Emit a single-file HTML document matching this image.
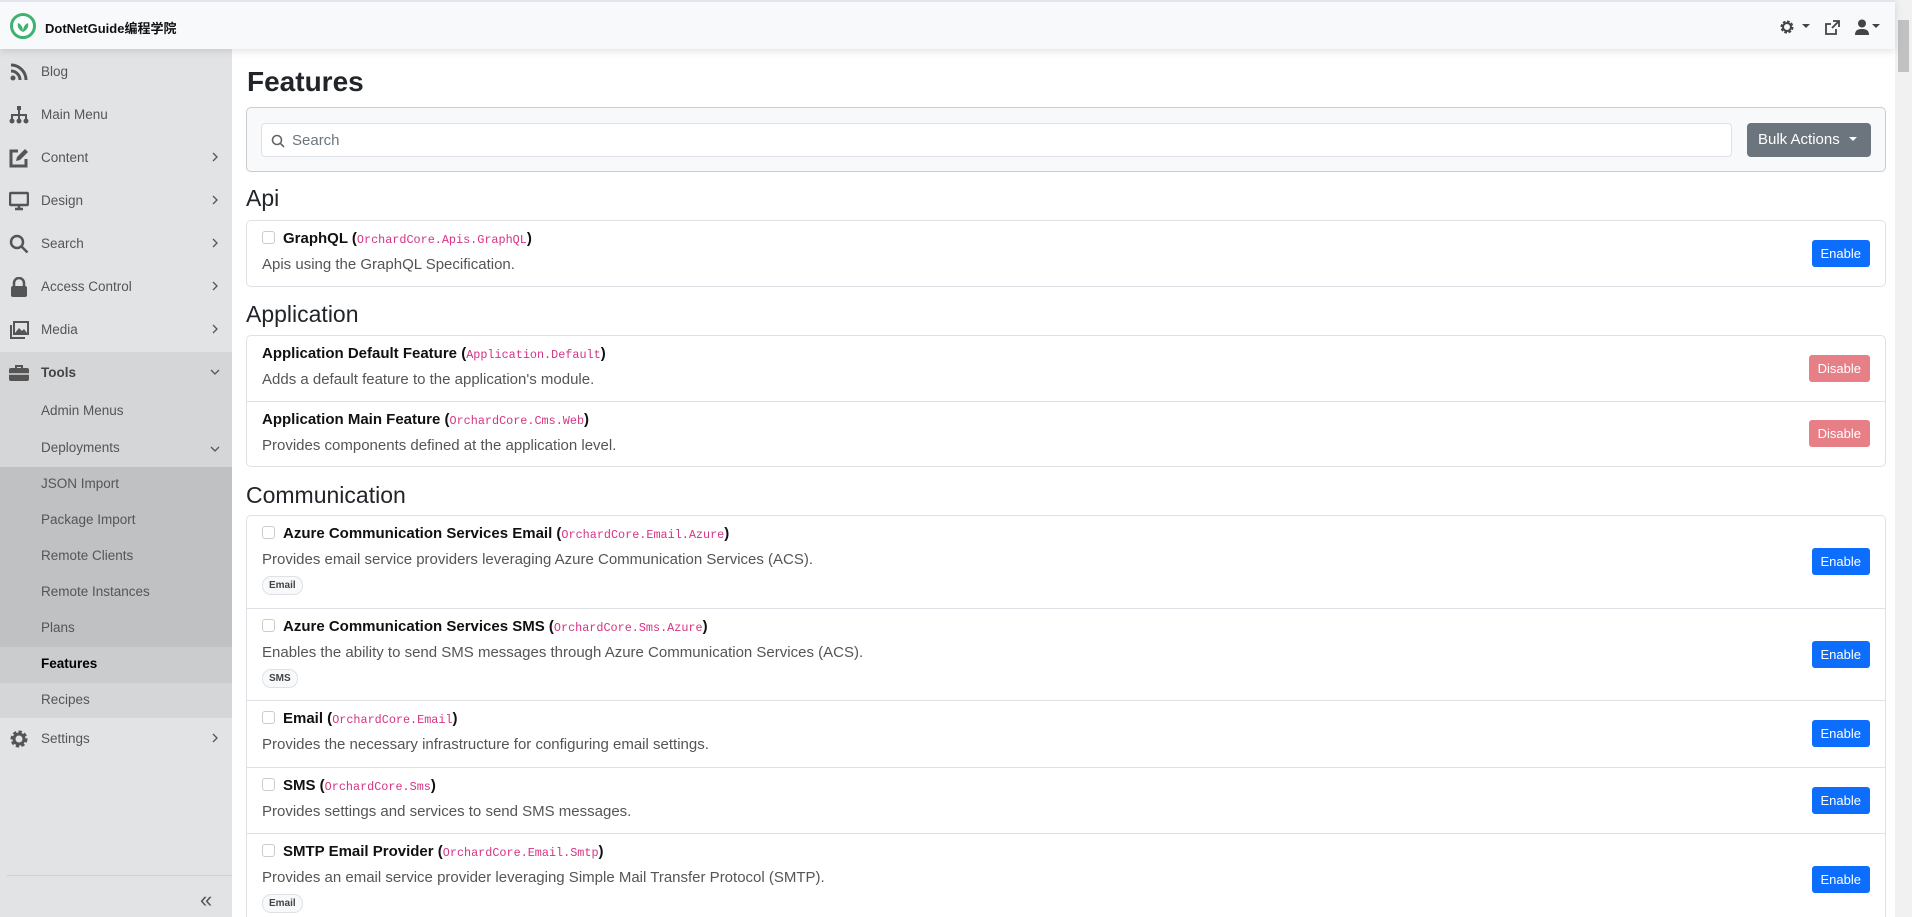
<!DOCTYPE html>
<html style="overflow:hidden;height:917px"><head><meta charset="utf-8"><style>
*{box-sizing:border-box;margin:0;padding:0}
body{width:1912px;height:917px;overflow:hidden;font-family:"Liberation Sans","Noto Sans CJK SC",sans-serif;background:#fff;position:relative;color:#212529}
.top{position:absolute;left:0;top:0;width:1895px;height:49px;background:#f8f9fa;box-shadow:0 2px 8px rgba(0,0,0,.12);z-index:3;border-top:2px solid #e4e4ee}
.logo{position:absolute;left:10px;top:11px;width:26px;height:26px;border-radius:50%;border:3px solid #3cb371;background:#fff}
.brand{position:absolute;left:45px;top:16px;font-size:13px;font-weight:bold;color:#111}
.side{position:absolute;left:0;top:49px;width:232px;height:868px;background:#e2e3e5}
.it{position:absolute;left:0;width:232px;font-size:13.5px;color:#555}
.it .t{position:absolute;left:41px}
.it .c{position:absolute;left:211px;top:4px;width:8px;height:10px}
.ic{position:absolute;left:9px;width:20px;height:20px}
.sb{position:absolute;right:0;top:0;width:17px;height:917px;background:#f1f1f1}
.main{position:absolute;left:232px;top:49px;width:1663px;height:868px;overflow:hidden}
h1{position:absolute;left:15px;top:17px;font-size:28px;font-weight:bold;color:#212529}
.panel{position:absolute;left:14px;top:58px;width:1640px;height:65px;background:#f8f9fa;border:1px solid #ccc;border-radius:5px}
.srch{position:absolute;left:14px;top:15px;width:1471px;height:34px;background:#fff;border:1px solid #dee2e6;border-radius:4px;font-size:15px;color:#6c757d;padding:8px 0 0 30px}
.bulk{position:absolute;left:1500px;top:15px;width:124px;height:34px;background:#6c757d;border-radius:4px;color:#fff;font-size:15px;padding:8px 0 0 11px}
.h2{position:absolute;left:14px;font-size:23px;color:#212529}
.card{position:absolute;left:14px;width:1640px;border:1px solid #dee2e6;border-radius:5px;background:#fff}
.row{position:relative;border-bottom:1px solid #dee2e6}
.row:last-child{border-bottom:none}
.ti{position:absolute;left:15px;top:9px;font-size:15px;font-weight:bold;color:#111;white-space:nowrap}
.ti code{font-family:"Liberation Mono",monospace;font-weight:normal;font-size:11.8px;color:#d63384}
.ti .cb{display:inline-block;width:13px;height:13px;border:1px solid #ccc;border-radius:3px;vertical-align:-1px;margin-right:8px}
.ds{position:absolute;left:15px;top:35px;font-size:15px;color:#555;white-space:nowrap}
.bg{position:absolute;left:15px;top:60px;font-size:10px;font-weight:bold;color:#444;background:#f8f9fa;border:1px solid #dee2e6;border-radius:9px;padding:3px 6px}
.btn{position:absolute;right:15px;height:27px;border-radius:3px;color:#fff;font-size:13px;padding:6px 9px 0}
.en{background:#0d6efd}.di{background:#e77f87}
</style></head><body>
<div class="top"><div class="logo"><svg width="20" height="20" viewBox="0 0 20 20"><path d="M10 16C6 14 4 11 5 7c3 1 5 4 5 9zM10 16c4-2 6-5 5-9-3 1-5 4-5 9z" fill="#3cb371"/></svg></div>
<div class="brand">DotNetGuide编程学院</div>
<svg style="position:absolute;left:1779px;top:17px" width="16" height="16" viewBox="0 0 16 16"><circle cx="8" cy="8" r="5" fill="none" stroke="#444" stroke-width="3" stroke-dasharray="2.5 1.4"/><circle cx="8" cy="8" r="4" fill="none" stroke="#444" stroke-width="2"/></svg>
<div style="position:absolute;left:1802px;top:22px;border:4px solid transparent;border-top-color:#444"></div>
<svg style="position:absolute;left:1825px;top:18px" width="15" height="15" viewBox="0 0 15 15"><path d="M8 1h6v6M14 1L7 8M11 9v5H1V4h5" fill="none" stroke="#444" stroke-width="1.8"/></svg>
<svg style="position:absolute;left:1855px;top:17px" width="14" height="16" viewBox="0 0 14 16"><circle cx="7" cy="4.5" r="4" fill="#444"/><path d="M0 16c0-5 3-6 7-6s7 1 7 6z" fill="#444"/></svg>
<div style="position:absolute;left:1872px;top:22px;border:4px solid transparent;border-top-color:#444"></div>
</div>
<div class="side">
<div style="position:absolute;top:303px;left:0;width:232px;height:366px;background:#d5d6d8"></div>
<div style="position:absolute;top:418px;left:0;width:232px;height:180px;background:#c0c1c3"></div>
<div style="position:absolute;top:598px;left:0;width:232px;height:36px;background:#cbccce"></div>
<div class="it" style="top:13px"><svg class="ic" viewBox="0 0 20 20"><circle cx="4" cy="16" r="2.5" fill="#555"/><path d="M2 9a9 9 0 0 1 9 9M2 3a15 15 0 0 1 15 15" fill="none" stroke="#555" stroke-width="3"/></svg><span class="t" style="top:2px">Blog</span></div>
<div class="it" style="top:56px"><svg class="ic" viewBox="0 0 20 20"><rect x="8" y="1" width="4" height="4" fill="#555"/><path d="M10 5v5M3 14v-4h14v4M10 10v4" stroke="#555" stroke-width="2" fill="none"/><circle cx="3" cy="16" r="2.5" fill="#555"/><circle cx="10" cy="16" r="2.5" fill="#555"/><circle cx="17" cy="16" r="2.5" fill="#555"/></svg><span class="t" style="top:2px">Main Menu</span></div>
<div class="it" style="top:99px"><svg class="ic" viewBox="0 0 20 20"><path d="M9 3H2v15h15v-7" fill="none" stroke="#555" stroke-width="3"/><path d="M7 13l1-4 8-8 3 3-8 8z" fill="#555"/></svg><span class="t" style="top:2px">Content</span><svg class="c" viewBox="0 0 8 10"><path d="M2 1l4 4-4 4" fill="none" stroke="#555" stroke-width="1.3"/></svg></div>
<div class="it" style="top:142px"><svg class="ic" viewBox="0 0 20 20"><rect x="1" y="2" width="18" height="12" rx="1" fill="none" stroke="#555" stroke-width="2.5"/><path d="M6 18h8M10 14v4" stroke="#555" stroke-width="2.5"/></svg><span class="t" style="top:2px">Design</span><svg class="c" viewBox="0 0 8 10"><path d="M2 1l4 4-4 4" fill="none" stroke="#555" stroke-width="1.3"/></svg></div>
<div class="it" style="top:185px"><svg class="ic" viewBox="0 0 20 20"><circle cx="8" cy="8" r="6" fill="none" stroke="#555" stroke-width="2.5"/><path d="M12.5 12.5l6 6" stroke="#555" stroke-width="2.5"/></svg><span class="t" style="top:2px">Search</span><svg class="c" viewBox="0 0 8 10"><path d="M2 1l4 4-4 4" fill="none" stroke="#555" stroke-width="1.3"/></svg></div>
<div class="it" style="top:228px"><svg class="ic" viewBox="0 0 20 20"><path d="M5 9V6a5 5 0 0 1 10 0v3" fill="none" stroke="#555" stroke-width="2.5"/><rect x="2" y="9" width="16" height="11" rx="2" fill="#555"/></svg><span class="t" style="top:2px">Access Control</span><svg class="c" viewBox="0 0 8 10"><path d="M2 1l4 4-4 4" fill="none" stroke="#555" stroke-width="1.3"/></svg></div>
<div class="it" style="top:271px"><svg class="ic" viewBox="0 0 20 20"><path d="M2 5v13h14" fill="none" stroke="#555" stroke-width="2"/><rect x="5" y="2" width="14" height="12" fill="none" stroke="#555" stroke-width="2"/><path d="M6 13l4-5 3 3 2-2 3 4z" fill="#555"/></svg><span class="t" style="top:2px">Media</span><svg class="c" viewBox="0 0 8 10"><path d="M2 1l4 4-4 4" fill="none" stroke="#555" stroke-width="1.3"/></svg></div>
<div class="it" style="top:314px"><svg class="ic" viewBox="0 0 20 20"><path d="M7 5V3h6v2" fill="none" stroke="#555" stroke-width="2"/><rect x="0" y="5" width="20" height="13" rx="2" fill="#555"/><path d="M0 11h20" stroke="#d5d6d8" stroke-width="1.5"/></svg><span class="t" style="top:2px;font-weight:bold;color:#444">Tools</span><svg class="c" style="width:10px;left:210px" viewBox="0 0 10 10"><path d="M1 3l4 4 4-4" fill="none" stroke="#555" stroke-width="1.3"/></svg></div>
<div class="it" style="top:354px"><span class="t">Admin Menus</span></div>
<div class="it" style="top:391px"><span class="t">Deployments</span><svg class="c" style="width:10px;left:210px" viewBox="0 0 10 10"><path d="M1 3l4 4 4-4" fill="none" stroke="#555" stroke-width="1.3"/></svg></div>
<div class="it" style="top:427px"><span class="t">JSON Import</span></div>
<div class="it" style="top:463px"><span class="t">Package Import</span></div>
<div class="it" style="top:499px"><span class="t">Remote Clients</span></div>
<div class="it" style="top:535px"><span class="t">Remote Instances</span></div>
<div class="it" style="top:571px"><span class="t">Plans</span></div>
<div class="it" style="top:607px"><span class="t" style="font-weight:bold;color:#000">Features</span></div>
<div class="it" style="top:643px"><span class="t">Recipes</span></div>
<div class="it" style="top:680px"><svg class="ic" viewBox="0 0 20 20"><circle cx="10" cy="10" r="6.5" fill="none" stroke="#555" stroke-width="4" stroke-dasharray="3 2"/><circle cx="10" cy="10" r="5" fill="none" stroke="#555" stroke-width="3"/></svg><span class="t" style="top:2px">Settings</span><svg class="c" viewBox="0 0 8 10"><path d="M2 1l4 4-4 4" fill="none" stroke="#555" stroke-width="1.3"/></svg></div>
<div style="position:absolute;left:7px;top:826px;width:225px;border-top:1px solid #d0d0d2"></div>
<div style="position:absolute;left:200px;top:838px;font-size:22px;color:#555">«</div>
</div>
<div class="main">
<h1>Features</h1>
<div class="panel"><div class="srch"><svg style="position:absolute;left:9px;top:10px" width="14" height="14" viewBox="0 0 14 14"><circle cx="6" cy="6" r="4.5" fill="none" stroke="#666" stroke-width="1.6"/><path d="M9.5 9.5l3.5 3.5" stroke="#666" stroke-width="1.6"/></svg>Search</div><div class="bulk">Bulk Actions <span style="display:inline-block;border:4px solid transparent;border-top-color:#fff;vertical-align:-1px;margin-left:5px"></span></div></div>
<div class="h2" style="top:136px">Api</div>
<div class="card" style="top:171px;height:67px"><div class="row" style="height:65px"><div class="ti"><span class="cb"></span>GraphQL (<code>OrchardCore.Apis.GraphQL</code>)</div><div class="ds">Apis using the GraphQL Specification.</div><div class="btn en" style="top:19px">Enable</div></div></div>
<div class="h2" style="top:252px">Application</div>
<div class="card" style="top:286px;height:132px">
<div class="row" style="height:66px"><div class="ti">Application Default Feature (<code>Application.Default</code>)</div><div class="ds">Adds a default feature to the application's module.</div><div class="btn di" style="top:19px">Disable</div></div>
<div class="row" style="height:64px"><div class="ti">Application Main Feature (<code>OrchardCore.Cms.Web</code>)</div><div class="ds">Provides components defined at the application level.</div><div class="btn di" style="top:18px">Disable</div></div></div>
<div class="h2" style="top:433px">Communication</div>
<div class="card" style="top:466px;height:440px">
<div class="row" style="height:93px"><div class="ti"><span class="cb"></span>Azure Communication Services Email (<code>OrchardCore.Email.Azure</code>)</div><div class="ds">Provides email service providers leveraging Azure Communication Services (ACS).</div><div class="bg">Email</div><div class="btn en" style="top:32px">Enable</div></div>
<div class="row" style="height:92px"><div class="ti"><span class="cb"></span>Azure Communication Services SMS (<code>OrchardCore.Sms.Azure</code>)</div><div class="ds">Enables the ability to send SMS messages through Azure Communication Services (ACS).</div><div class="bg">SMS</div><div class="btn en" style="top:32px">Enable</div></div>
<div class="row" style="height:67px"><div class="ti"><span class="cb"></span>Email (<code>OrchardCore.Email</code>)</div><div class="ds">Provides the necessary infrastructure for configuring email settings.</div><div class="btn en" style="top:19px">Enable</div></div>
<div class="row" style="height:66px"><div class="ti"><span class="cb"></span>SMS (<code>OrchardCore.Sms</code>)</div><div class="ds">Provides settings and services to send SMS messages.</div><div class="btn en" style="top:19px">Enable</div></div>
<div class="row" style="height:110px"><div class="ti"><span class="cb"></span>SMTP Email Provider (<code>OrchardCore.Email.Smtp</code>)</div><div class="ds">Provides an email service provider leveraging Simple Mail Transfer Protocol (SMTP).</div><div class="bg">Email</div><div class="btn en" style="top:32px">Enable</div></div>
</div>
</div>
<div class="sb"><div style="position:absolute;left:3px;top:20px;width:11px;height:52px;background:#c1c1c1"></div></div>
</body></html>
